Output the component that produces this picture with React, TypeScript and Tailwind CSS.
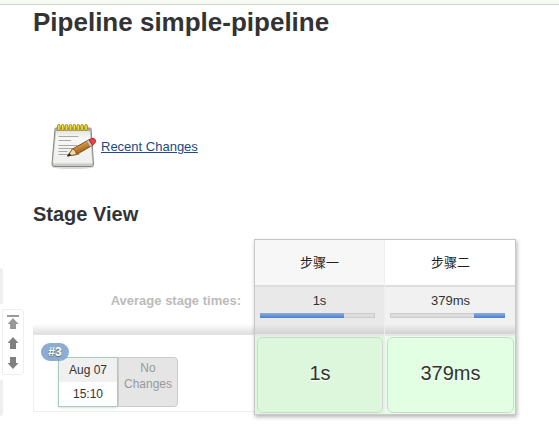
import React from "react";

const stages = [
  {
    name: "步骤一",
    time: "1s",
    offset: 0,
    share: 73,
    head: "bg-[#f7f7f7]",
    average: "bg-[#e9e9e9]",
    cell: "bg-[#ddf7dd]",
    divider: "border-r border-[#eeeeee]",
    track: "mr-[9px]",
    inset: "pr-px",
  },
  {
    name: "步骤二",
    time: "379ms",
    offset: 73,
    share: 27,
    head: "bg-white",
    average: "bg-[#f1f1f1]",
    cell: "bg-[#e3ffe3]",
    divider: "",
    track: "mr-[11px]",
    inset: "pr-0.5",
  },
];

function NotepadIcon() {
  const rings = [0, 1, 2, 3, 4, 5, 6, 7];
  return (
    <svg className="h-12 w-12 shrink-0" viewBox="0 0 48 48" aria-hidden="true">
      <defs>
        <linearGradient id="sheet" x1="0" y1="0" x2="0" y2="1">
          <stop offset="0" stopColor="#dededc" />
          <stop offset="0.25" stopColor="#f7f7f6" />
          <stop offset="1" stopColor="#efefed" />
        </linearGradient>
        <linearGradient id="wood" x1="0" y1="0" x2="0.6" y2="1">
          <stop offset="0.2" stopColor="#efbb69" />
          <stop offset="0.8" stopColor="#a4631b" />
        </linearGradient>
      </defs>
      <ellipse cx="23" cy="44" rx="21" ry="2" fill="#000" opacity="0.14" />
      <path d="M6 5h34q1 0 1.100 1l2.400 35q.1 2.500-2 2.500H4q-2.100 0-2-2.500L5 6q.1-1 1-1z" fill="#c9c9c7" stroke="#868684" />
      <path d="M6.500 6h33l2.800 33q.1 1.500-1.400 1.500H4.500q-1.500 0-1.400-1.500z" fill="url(#sheet)" />
      <path d="M6.300 5.500h33.400l.2 2.500H6.100z" fill="#8d8d8b" opacity="0.7" />
      <g stroke="#a9a9a9" strokeWidth="1">
        <path d="M8.500 13.500h20M8.500 17.500h12.500M8.500 22.500h19M8.500 25.500h15M8.500 28.500h9M8.500 31.500h21" />
      </g>
      {rings.map((ring) => (
        <rect
          key={ring}
          x={7.5 + ring * 3.9}
          y="1.500"
          width="2.600"
          height="6"
          rx="1.300"
          fill="#f2dc3c"
          stroke="#a18a00"
          strokeWidth="0.900"
        />
      ))}
      <path d="M17.500 33l5-7 16-9 3.700 5.500-15.700 9z" fill="url(#wood)" stroke="#76470f" strokeWidth="0.900" />
      <path d="M17.500 33l5-7 2.800 1.700 1.200 3.800z" fill="#f3d7a7" stroke="#76470f" strokeWidth="0.700" />
      <path d="M17.200 33.200l2.200-3.100 1.900 2.300z" fill="#222" />
      <path d="M36.500 18.200l2.500-1.400 3.500 5.500-2.500 1.400z" fill="#c5c8c5" stroke="#777" strokeWidth="0.500" />
      <path d="M39 16.800l2.300-1.200q2.700-.9 3.900 1 1.200 2.300-.7 3.800l-2 1.900z" fill="#e84545" stroke="#b01010" strokeWidth="0.800" />
    </svg>
  );
}

function ScrollControls() {
  return (
    <div className="absolute left-0 top-[268px] flex flex-col">
      <div className="h-9 w-[3px] rounded-tr bg-[#eeeeee]" />
      <div className="my-[5px] ml-0.5 flex h-[66px] w-[22px] flex-col items-center justify-between rounded-r border border-[#eeeeee] bg-white py-[5px]">
        <button type="button" aria-label="Scroll to top">
          <svg className="block" width="12" height="14" viewBox="0 0 12 14" fill="#999999">
            <path d="M0 0h12v2H0zM6 3l5.500 6H9v5H3V9H.5z" />
          </svg>
        </button>
        <button type="button" aria-label="Scroll up">
          <svg className="block" width="12" height="12" viewBox="0 0 12 12" fill="#808080">
            <path d="M6 0l5.500 6H9v6H3V6H.5z" />
          </svg>
        </button>
        <button type="button" aria-label="Scroll down">
          <svg className="block" width="12" height="12" viewBox="0 0 12 12" fill="#808080">
            <path d="M6 12L.5 6H3V0h6v6h2.500z" />
          </svg>
        </button>
      </div>
      <div className="h-9 w-[3px] rounded-br bg-[#eeeeee]" />
    </div>
  );
}

function StageTable() {
  return (
    <div className="relative mt-[13px] w-fit">
      <table className="table-fixed border-separate border-spacing-0 text-[13px] leading-4">
        <colgroup>
          <col className="w-[222px]" />
          <col className="w-[130px]" />
          <col className="w-[131px]" />
        </colgroup>
        <thead>
          <tr className="h-12">
            <td />
            {stages.map((stage) => (
              <th
                key={stage.name}
                scope="col"
                className={`border-b-2 border-b-[#dddddd] p-0 pt-0.5 font-normal text-[#222222] ${stage.head} ${stage.divider}`}
              >
                {stage.name}
              </th>
            ))}
          </tr>
        </thead>
        <tbody>
          <tr className="h-[47px]">
            <th
              scope="row"
              className="bg-linear-to-t from-[#dedede] to-transparent bg-size-[100%_10px] bg-bottom bg-no-repeat p-0 pr-3.5 pt-1.5 text-right align-top text-[#bbbbbb]"
            >
              Average stage times:
            </th>
            {stages.map((stage) => (
              <td
                key={stage.name}
                className={`bg-linear-to-t from-[#d2d2d2] to-transparent bg-size-[100%_10px] bg-bottom bg-no-repeat p-0 pt-1.5 text-center align-top text-[#333333] ${stage.average} ${stage.divider}`}
              >
                {stage.time}
                <div className={`ml-[5px] mt-1 h-[5px] bg-[#dddddd] shadow-[inset_0_0_0_1px_#cccccc] ${stage.track}`}>
                  <div
                    className="h-[5px] bg-linear-to-b from-[#8cadd9] to-[#4a7fd0]"
                    style={{ marginLeft: `${stage.offset}%`, width: `${stage.share}%` }}
                  />
                </div>
              </td>
            ))}
          </tr>
          <tr className="h-[81px]">
            <th scope="row" className="p-0 pb-[3px] align-top font-normal">
              <div className="flex h-[78px] items-start border border-r-0 border-[#eeeeee] border-t-[#e3e3e3] pl-[7px] pt-2 text-xs">
                <span className="relative z-10 h-[18px] w-7 shrink-0 rounded-full bg-[#8cadd2] text-center font-bold leading-[18px] text-white [text-shadow:0_1px_1px_#666]">
                  #3
                </span>
                <div className="-ml-[11px] mt-3.5 h-[50px] w-[60px] shrink-0 border border-[#a5cbb9] text-center leading-6 text-[#333333] shadow-sm">
                  <div className="bg-[#f0f0f0]">Aug 07</div>
                  <div>15:10</div>
                </div>
                <div className="mt-3.5 h-[50px] w-[60px] rounded-r border border-[#cccccc] bg-[#e5e5e5] pt-0.5 text-center leading-4 text-[#999999]">
                  No
                  <br />
                  Changes
                </div>
              </div>
            </th>
            {stages.map((stage) => (
              <td
                key={stage.name}
                className={`border-t-2 border-t-[#e8e8e8] p-0 pb-0.5 pl-0.5 pt-px text-center text-xl text-[#333333] ${stage.cell} ${stage.divider} ${stage.inset}`}
              >
                <div className="flex h-[76px] items-center justify-center rounded-md border border-[#cdd8cd] pb-1 [text-shadow:0_1px_1px_#fff]">
                  {stage.time}
                </div>
              </td>
            ))}
          </tr>
        </tbody>
      </table>
      <div className="pointer-events-none absolute inset-y-0 right-0 w-[262px] border border-[#c8c8c8] shadow-[1px_2px_4px_rgba(0,0,0,0.3)]" />
    </div>
  );
}

export default function App() {
  return (
    <div className="relative min-h-screen bg-white font-['Liberation_Sans','Noto_Sans_CJK_SC',sans-serif] text-[#333333]">
      <header className="h-[5px] border-b border-[#d3d7cf] bg-[#f6faf2]" />
      <main className="pl-[33px]">
        <h1 className="pt-0.5 text-[26px] font-bold leading-[30px]">Pipeline simple-pipeline</h1>
        <div className="mt-[86px] flex items-center pl-[17px] text-[13px] leading-4">
          <NotepadIcon />
          <a href="#changes" className="ml-[3px] text-[#204a87] underline">
            Recent Changes
          </a>
        </div>
        <h2 className="mt-[31px] text-xl font-bold leading-6">Stage View</h2>
        <StageTable />
      </main>
      <ScrollControls />
    </div>
  );
}
